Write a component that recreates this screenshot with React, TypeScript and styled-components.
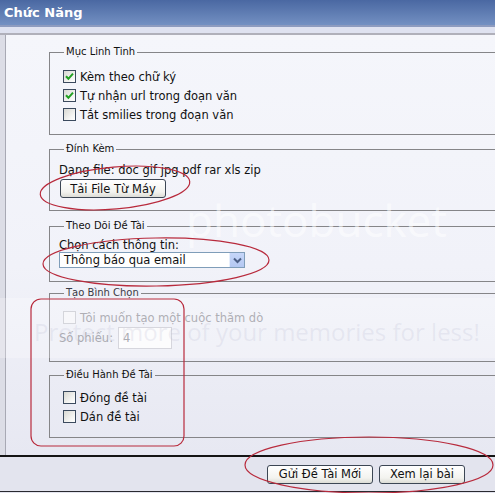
import React from 'react'
import styled, {createGlobalStyle} from 'styled-components'

const GlobalStyle = createGlobalStyle`
  body {
    margin: 0;
    font-family: "DejaVu Sans", Tahoma, sans-serif;
    background: #ffffff;
  }
`

const Screen = styled.div`
  position: relative;
  width: 495px;
  height: 493px;
  overflow: hidden;
  background: #e4e5ef;
`

const Header = styled.div`
  height: 25px;
  padding-left: 4px;
  display: flex;
  align-items: center;
  background: linear-gradient(#4a68a2, #7390c2);
  border-bottom: 2px solid #8d9bbf;
  color: #ffffff;
  font-size: 13px;
  font-weight: bold;
`

const SubStrip = styled.div`
  height: 6px;
  background: #dfe2f0;
  border-bottom: 2px solid #b0b0ba;
`

const Body = styled.div`
  display: flex;
  height: 420px;
`

const SideStrip = styled.div`
  width: 5px;
  background: #dcdde6;
  border-right: 1px solid #a8a9b4;
`

const Panel = styled.div`
  flex: 1;
  overflow: hidden;
  padding: 11px 0 0 43px;
  background: linear-gradient(#f5f6fb 0%, #f1f2f9 55%, #e7e8f2 100%);
`

const Group = styled.fieldset<{$top: number; $pad: string}>`
  box-sizing: border-box;
  width: 470px;
  margin: ${(p) => p.$top}px 0 0 0;
  padding: ${(p) => p.$pad};
  border: 1px solid #858588;
  min-inline-size: 0;
`

const Legend = styled.legend<{$faded?: boolean}>`
  margin-left: 5px;
  padding: 0 2px;
  font-size: 10px;
  line-height: 12px;
  color: ${(p) => (p.$faded ? '#3a3a44' : '#111111')};
`

const Line = styled.div<{$muted?: boolean}>`
  font-size: 11.5px;
  line-height: 14px;
  color: ${(p) => (p.$muted ? '#8e8e96' : '#111111')};
`

const CheckRow = styled.label`
  display: flex;
  align-items: center;
  height: 19px;
  padding-left: 4px;
  gap: 4px;
  font-size: 11.5px;
  color: #111111;
`

const Box = styled.span<{$disabled?: boolean}>`
  box-sizing: border-box;
  width: 13px;
  height: 13px;
  display: flex;
  align-items: center;
  justify-content: center;
  border: 1px solid ${(p) => (p.$disabled ? '#c6c7cf' : '#3b4a5e')};
  background: ${(p) =>
    p.$disabled ? '#f4f4f8' : 'linear-gradient(135deg, #d8d8d2, #f6f6f4 70%, #ffffff)'};
`

const RowText = styled.span<{$disabled?: boolean}>`
  color: ${(p) => (p.$disabled ? '#94949c' : '#111111')};
`

const XpButton = styled.button<{$w: number}>`
  box-sizing: border-box;
  width: ${(p) => p.$w}px;
  height: 19px;
  padding: 0;
  border: 1px solid #3c4654;
  border-radius: 3px;
  background: linear-gradient(#ffffff, #f3f3ef 70%, #dcdcd6);
  font-family: "DejaVu Sans", Tahoma, sans-serif;
  font-size: 11.5px;
  color: #111111;
`

const UploadButton = styled(XpButton)`
  display: block;
  margin: 2px 0 0 1px;
`

const Select = styled.div`
  box-sizing: border-box;
  width: 186px;
  height: 16px;
  display: flex;
  align-items: center;
  justify-content: space-between;
  border: 1px solid #7f9db9;
  background: #ffffff;
  font-size: 11.5px;
  padding-left: 4px;
  color: #111111;
`

const DropKnob = styled.span`
  box-sizing: border-box;
  width: 15px;
  height: 14px;
  display: flex;
  align-items: center;
  justify-content: center;
  background: linear-gradient(#c6d6f8, #b4c8f2);
  border-left: 1px solid #e6eefc;
`

const CountRow = styled.div`
  display: flex;
  align-items: center;
  gap: 5px;
  height: 22px;
`

const CountInput = styled.div`
  box-sizing: border-box;
  width: 54px;
  height: 22px;
  padding-left: 4px;
  display: flex;
  align-items: center;
  border: 1px solid #c8c9d2;
  background: #fbfbfd;
  color: #909098;
  font-size: 11.5px;
`

const Footer = styled.div`
  height: 34px;
  display: flex;
  align-items: center;
  justify-content: flex-end;
  gap: 6px;
  padding-right: 30px;
  border-top: 2px solid #141414;
  border-bottom: 1px solid #2a2a30;
  background: #e3e4ee;
`

const Watermark = styled.div`
  position: absolute;
  inset: 0;
  pointer-events: none;
`

const Band = styled.div`
  position: absolute;
  left: 0;
  right: 0;
  top: 298px;
  height: 60px;
  background: rgba(255, 255, 255, 0.25);
`

const MarkText = styled.div<{$x: number; $y: number; $size: number; $color: string}>`
  position: absolute;
  left: ${(p) => p.$x}px;
  top: ${(p) => p.$y}px;
  font-family: "Open Sans", sans-serif;
  font-size: ${(p) => p.$size}px;
  line-height: 1;
  white-space: nowrap;
  color: ${(p) => p.$color};
`

const Marks = styled.svg`
  position: absolute;
  left: 0;
  top: 0;
  pointer-events: none;
`

const Check = () => (
  <svg width="9" height="9" viewBox="0 0 9 9">
    <path d="M1 4.2 L3.4 6.8 L8 1.6" fill="none" stroke="#22a022" strokeWidth="2" />
  </svg>
)

type CheckProps = {label: string; checked?: boolean; disabled?: boolean}

const CheckItem = ({label, checked, disabled}: CheckProps) => (
  <CheckRow>
    <Box $disabled={disabled}>{checked && <Check />}</Box>
    <RowText $disabled={disabled}>{label}</RowText>
  </CheckRow>
)

const Chevron = () => (
  <svg width="9" height="7" viewBox="0 0 9 7">
    <path d="M1 1.5 L4.5 5 L8 1.5" fill="none" stroke="#4c5f86" strokeWidth="2" />
  </svg>
)

export default function App() {
  return (
    <Screen>
      <GlobalStyle />
      <Header>Chức Năng</Header>
      <SubStrip />
      <Body>
        <SideStrip />
        <Panel>
          <Group $top={0} $pad="9px 9px 10px 9px">
            <Legend>Mục Linh Tinh</Legend>
            <CheckItem label="Kèm theo chữ ký" checked />
            <CheckItem label="Tự nhận url trong đoạn văn" checked />
            <CheckItem label="Tắt smilies trong đoạn văn" />
          </Group>

          <Group $top={8} $pad="8px 9px 12px 9px">
            <Legend>Đính Kèm</Legend>
            <Line>Dạng file: doc gif jpg pdf rar xls zip</Line>
            <UploadButton $w={106}>Tải File Từ Máy</UploadButton>
          </Group>

          <Group $top={9} $pad="6px 9px 13px 9px">
            <Legend>Theo Dõi Đề Tài</Legend>
            <Line>Chọn cách thông tin:</Line>
            <Select>
              Thông báo qua email
              <DropKnob>
                <Chevron />
              </DropKnob>
            </Select>
          </Group>

          <Group $top={5} $pad="9px 9px 12px 9px">
            <Legend $faded>Tạo Bình Chọn</Legend>
            <CheckItem label="Tôi muốn tạo một cuộc thăm dò" disabled />
            <CountRow>
              <Line $muted>Số phiếu:</Line>
              <CountInput>4</CountInput>
            </CountRow>
          </Group>

          <Group $top={7} $pad="7px 9px 11px 9px">
            <Legend>Điều Hành Đề Tài</Legend>
            <CheckItem label="Đóng đề tài" />
            <CheckItem label="Dán đề tài" />
          </Group>
        </Panel>
      </Body>
      <Footer>
        <XpButton $w={106}>Gửi Đề Tài Mới</XpButton>
        <XpButton $w={86}>Xem lại bài</XpButton>
      </Footer>

      <Watermark>
        <Band />
        <MarkText $x={186} $y={198} $size={44} $color="rgba(255,255,255,0.55)">
          photobucket
        </MarkText>
        <MarkText $x={34} $y={320} $size={24} $color="rgba(185,187,210,0.22)">
          Protect more of your memories for less!
        </MarkText>
      </Watermark>

      <Marks width="495" height="493" viewBox="0 0 495 493">
        <g fill="none" stroke="#b82a3c" strokeWidth="1.2">
          <ellipse cx="115" cy="188" rx="75" ry="21" transform="rotate(-5 115 188)" />
          <ellipse cx="156" cy="262" rx="113" ry="24" transform="rotate(-1 156 262)" />
          <rect x="31" y="299" width="153" height="147" rx="10" />
          <ellipse cx="369" cy="465" rx="124" ry="28" />
        </g>
      </Marks>
    </Screen>
  )
}
